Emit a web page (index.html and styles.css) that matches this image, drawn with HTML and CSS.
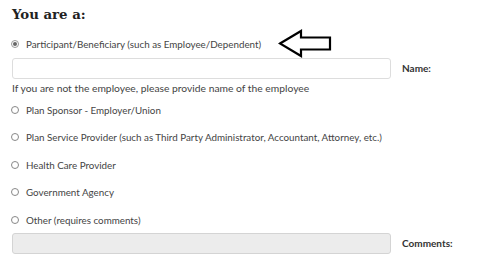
FILE: index.html
```html
<!DOCTYPE html>
<html>
<head>
<meta charset="utf-8">
<link rel="stylesheet" href="styles.css">
</head>
<body>
<div class="form">
  <h2 class="title">You are a:</h2>
  <div class="option first">
    <span class="radio checked"></span>
    <span class="label">Participant/Beneficiary (such as Employee/Dependent)</span>
    <svg class="arrow" width="54" height="29" viewBox="0 0 54 29">
      <path d="M2 14.5 L23 2 L23 8.5 L52 8.5 L52 20.5 L23 20.5 L23 27 Z" fill="#fff" stroke="#000" stroke-width="2.2" stroke-linejoin="miter"/>
    </svg>
  </div>
  <div class="field">
    <div class="input"></div>
    <span class="field-label">Name:</span>
  </div>
  <p class="help">If you are not the employee, please provide name of the employee</p>
  <div class="option after-help">
    <span class="radio"></span>
    <span class="label">Plan Sponsor - Employer/Union</span>
  </div>
  <div class="option">
    <span class="radio"></span>
    <span class="label">Plan Service Provider (such as Third Party Administrator, Accountant, Attorney, etc.)</span>
  </div>
  <div class="option">
    <span class="radio"></span>
    <span class="label">Health Care Provider</span>
  </div>
  <div class="option">
    <span class="radio"></span>
    <span class="label">Government Agency</span>
  </div>
  <div class="option">
    <span class="radio"></span>
    <span class="label">Other (requires comments)</span>
  </div>
  <div class="field comments">
    <div class="input disabled"></div>
    <span class="field-label">Comments:</span>
  </div>
</div>
</body>
</html>
```
FILE: styles.css
```css
html, body {
  margin: 0;
  padding: 0;
  background: #fff;
}
body {
  font-family: "Lato", "Liberation Sans", sans-serif;
  color: #444;
  width: 480px;
  height: 273px;
  overflow: hidden;
}
.form {
  padding: 6px 0 0 12px;
  display: flex;
  flex-direction: column;
}
.title {
  margin: 0;
  font-family: "DejaVu Serif", serif;
  font-weight: bold;
  font-size: 13.3px;
  line-height: 18px;
  color: #222;
}
.option {
  display: flex;
  align-items: center;
  height: 16px;
  margin-top: 11.5px;
  font-size: 9.8px;
}
.option.first {
  margin-top: 11.5px;
  position: relative;
}
.option.after-help {
  margin-top: 7px;
}
.radio {
  width: 6px;
  height: 6px;
  border: 1px solid #888;
  border-radius: 50%;
  margin-left: -1px;
  margin-right: 7px;
  flex: none;
  background: #fff;
  position: relative;
}
.radio.checked {
  border-color: #999;
}
.radio.checked::after {
  content: "";
  position: absolute;
  left: 1px;
  top: 1px;
  width: 4px;
  height: 4px;
  border-radius: 50%;
  background: #666;
}
.label {
  white-space: nowrap;
}
.arrow {
  position: absolute;
  left: 266px;
  top: -7px;
}
.field {
  display: flex;
  align-items: center;
  margin-top: 6px;
}
.input {
  width: 377px;
  height: 19px;
  border: 1px solid #ddd;
  border-radius: 3px;
  background: #fff;
  flex: none;
}
.input.disabled {
  background: #ececec;
  border-color: #d4d4d4;
}
.field-label {
  margin-left: 11px;
  font-size: 10px;
  font-weight: bold;
  color: #333;
}
.help {
  margin: 2px 0 0 0;
  font-size: 10.3px;
  line-height: 14px;
}
.comments {
  margin-top: 5px;
}
```
